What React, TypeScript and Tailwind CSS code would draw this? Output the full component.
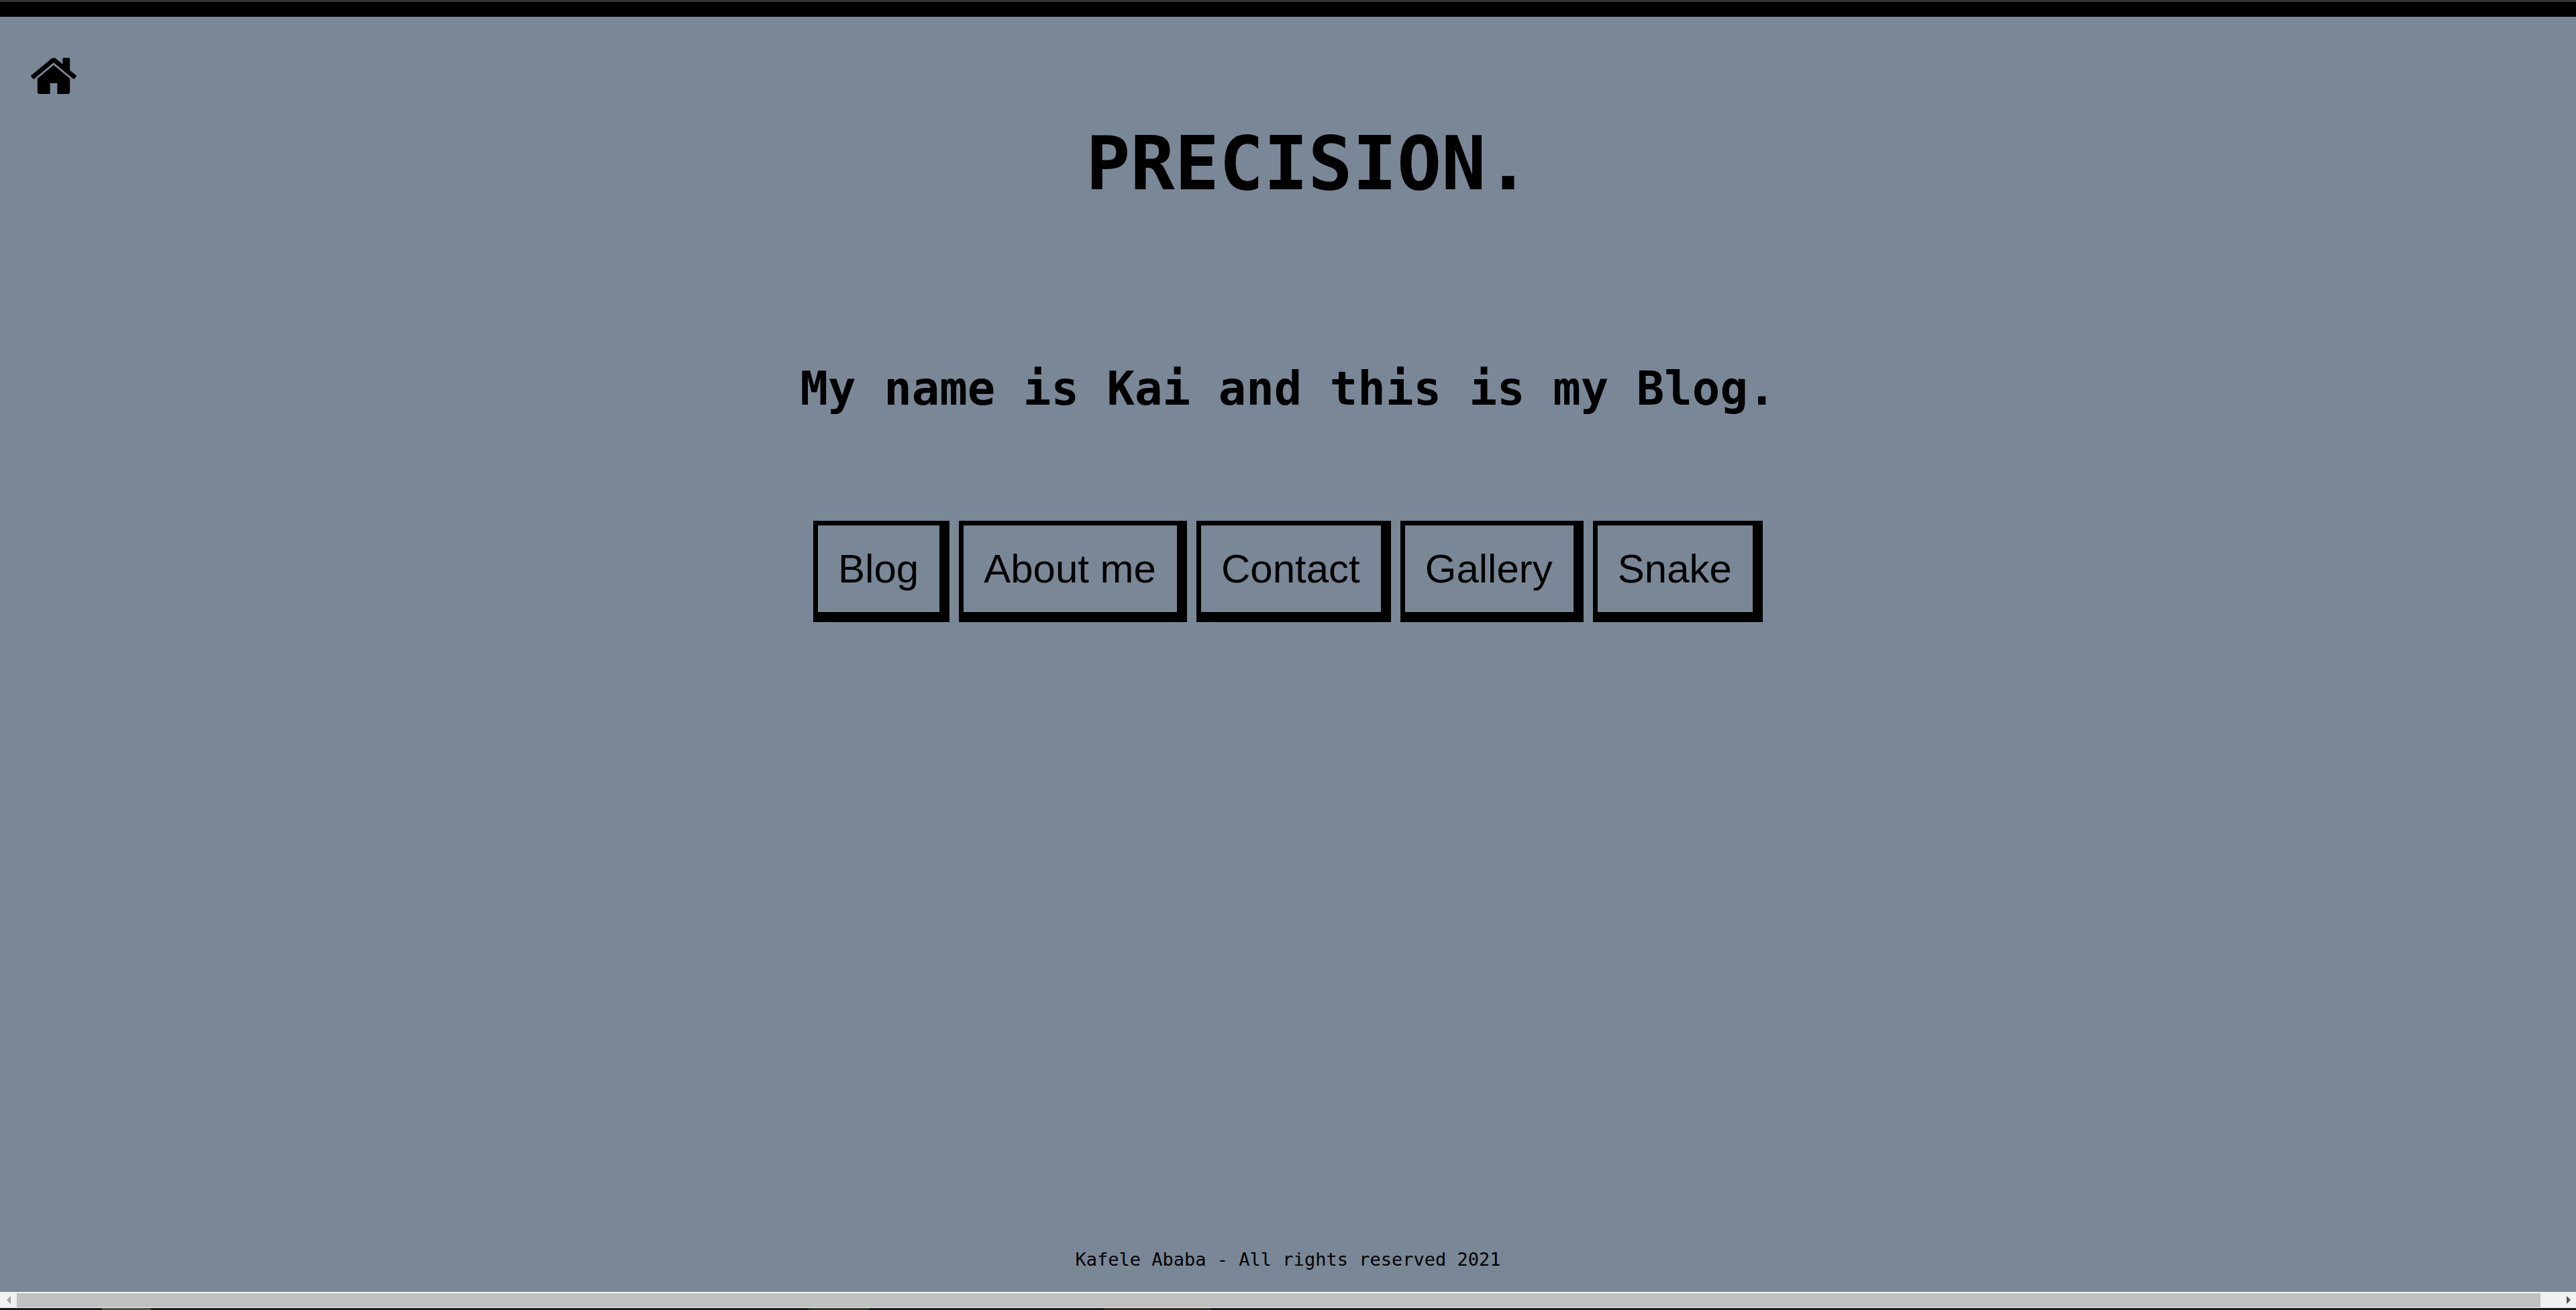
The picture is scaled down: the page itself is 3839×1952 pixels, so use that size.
import React from "react";

const links = ["Blog", "About me", "Contact", "Gallery", "Snake"];

function HomeIcon() {
  return (
    <svg viewBox="25 250 1614 1286" className="h-[54px] w-[68px]" fill="currentColor" aria-hidden="true">
      <path d="M1408 992v480q0 26-19 45t-45 19h-384v-384h-256v384h-384q-26 0-45-19t-19-45v-480q0-1 .5-3t.5-3l575-474 575 474q1 2 1 6zm223-69l-62 74q-8 9-21 11h-3q-13 0-21-7l-692-577-692 577q-12 8-24 7-13-2-21-11l-62-74q-8-10-7-23.5t11-21.5l719-599q32-26 76-26t76 26l244 204v-195q0-14 9-23t23-9h192q14 0 23 9t9 23v408l219 182q10 8 11 21.5t-7 23.5z" />
    </svg>
  );
}

function ScrollBar() {
  return (
    <div className="flex h-6 items-center bg-[#f1f1f1]">
      <button type="button" aria-label="Scroll left" className="flex w-[25px] justify-center text-[#a3a3a3]">
        <svg viewBox="0 0 6 12" className="h-3 w-[6px]" fill="currentColor"><path d="M6 0v12L0 6z" /></svg>
      </button>
      <div className="h-[21px] flex-1 bg-[#c1c1c1]" />
      <button type="button" aria-label="Scroll right" className="flex w-[53px] justify-end pr-2 text-[#505050]">
        <svg viewBox="0 0 6 12" className="h-3 w-[6px]" fill="currentColor"><path d="M0 0v12l6-6z" /></svg>
      </button>
    </div>
  );
}

export default function App() {
  return (
    <div className="flex min-h-screen flex-col bg-[#7a8797] font-['Consolas','DejaVu_Sans_Mono',monospace] text-black">
      <div className="h-[25px] border-t-[3px] border-[#333333] bg-black" />
      <header className="flex px-[46px] pt-[61px]">
        <a href="#home" aria-label="Home"><HomeIcon /></a>
      </header>
      <main className="flex flex-1 flex-col items-center">
        <h1 className="mt-[40px] pl-[60px] text-[110px] leading-[128px] font-bold">PRECISION.</h1>
        <h2 className="mt-[231px] text-[69px] leading-[80px] font-bold">My name is Kai and this is my Blog.</h2>
        <nav className="mt-[157px] flex gap-[14px] font-['Liberation_Sans',Arial,sans-serif]">
          {links.map((label) => (
            <a
              key={label}
              href="#"
              className="border-t-[7px] border-r-[15px] border-b-[15px] border-l-[7px] border-black py-[30px] pr-[31px] pl-[30px] text-[60px] leading-[69px]"
            >
              {label}
            </a>
          ))}
        </nav>
      </main>
      <footer className="pb-8 text-center text-[27px] leading-8">
        Kafele Ababa - All rights reserved 2021
      </footer>
      <ScrollBar />
      <div className="flex h-[3px] bg-[#1a1d1e]">
        <div className="ml-[152px] w-[73px] bg-[#4c4e4e]" />
        <div className="ml-[980px] w-[90px] bg-[#303c30]" />
        <div className="ml-[350px] w-[160px] bg-[#303026]" />
      </div>
    </div>
  );
}
